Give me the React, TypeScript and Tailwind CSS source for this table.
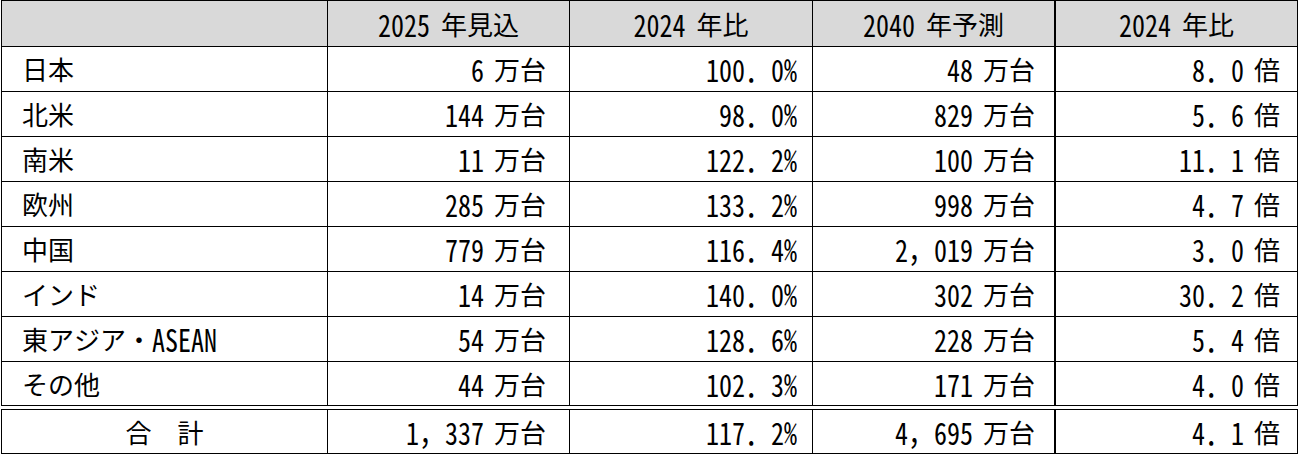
import React from 'react';

const rows = [
    ['日本', '6', '100．0%', '48', '8．0'],
    ['北米', '144', '98．0%', '829', '5．6'],
    ['南米', '11', '122．2%', '100', '11．1'],
    ['欧州', '285', '133．2%', '998', '4．7'],
    ['中国', '779', '116．4%', '2，019', '3．0'],
    ['インド', '14', '140．0%', '302', '30．2'],
    ['東アジア・ASEAN', '54', '128．6%', '228', '5．4'],
    ['その他', '44', '102．3%', '171', '4．0'],
];

const total = ['合　計', '1，337', '117．2%', '4，695', '4．1'];

const font = { fontFamily: '"Noto Sans Mono CJK JP", "Noto Sans CJK JP", monospace' };

// tall narrow half-width glyphs, as in the source sheet
function N({ children }: { children: React.ReactNode }) {
    return <span className="inline-block scale-y-[1.18]">{children}</span>;
}

function Label({ text }: { text: string }) {
    if (text.endsWith('ASEAN')) {
        return <>{text.replace('ASEAN', '')}<N>ASEAN</N></>;
    }
    return <>{text}</>;
}

function Row({ cells, h, last }: { cells: string[]; h: string; last?: boolean }) {
    return (
        <>
            <div className={`${h} border-l border-r border-b border-black flex items-center ${last ? 'justify-center' : 'pl-[20px]'}`}>
                <Label text={cells[0]} />
            </div>
            <div className={`${h} border-r border-b border-black flex items-center justify-end pr-[23px]`}>
                <N>{cells[1]}</N><span className="w-[10px]"></span>万台
            </div>
            <div className={`${h} border-r border-b border-black flex items-center justify-end pr-[15px]`}>
                <N>{cells[2]}</N>
            </div>
            <div className={`${h} border-r-2 border-b border-black flex items-center justify-end pr-[19px]`}>
                <N>{cells[3]}</N><span className="w-[10px]"></span>万台
            </div>
            <div className={`${h} border-r border-b border-black flex items-center justify-end pr-[17px]`}>
                <N>{cells[4]}</N><span className="w-[10px]"></span>倍
            </div>
        </>
    );
}

function Head({ year, label, thick }: { year: string; label: string; thick?: boolean }) {
    return (
        <div className={`h-[47px] border-t ${thick ? 'border-r-2' : 'border-r'} border-b border-black bg-[#d9d9d9] flex items-center justify-center`}>
            <N>{year}</N><span className="w-[11px]"></span>{label}
        </div>
    );
}

export default function App() {
    return (
        <div className="w-[1299px] h-[456px] bg-white overflow-hidden">
            <div
                className="ml-px grid grid-cols-[327px_242px_243px_243px_242px] text-[26px] leading-none text-black"
                style={font}
            >
                {/* header */}
                <div className="h-[47px] border border-black bg-[#d9d9d9]"></div>
                <Head year="2025" label="年見込" />
                <Head year="2024" label="年比" />
                <Head year="2040" label="年予測" thick />
                <Head year="2024" label="年比" />

                {rows.map((r, i) => (
                    <Row key={i} cells={r} h={i === 7 ? 'h-[44px]' : 'h-[45px]'} />
                ))}

                {/* double rule */}
                <div className="col-span-5 h-[4px] border-b border-black"></div>

                <Row cells={total} h="h-[44px]" last />
            </div>
        </div>
    );
}
